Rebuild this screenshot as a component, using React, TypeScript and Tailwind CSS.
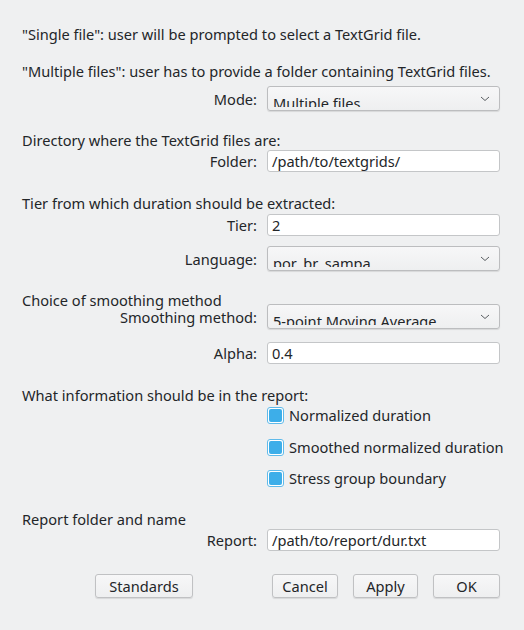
import React from 'react';

const Chevron = () => (
  <svg width="10" height="6" viewBox="0 0 10 6" className="absolute right-[9px] top-[9px]">
    <path d="M1 1 L5 4.5 L9 1" fill="none" stroke="#5a5e62" strokeWidth="1" />
  </svg>
);

const Combo = ({ value }: { value: string }) => (
  <div className="relative h-[25px] w-[233px] rounded-[3px] border border-[#bcbdbf] bg-gradient-to-b from-[#f7f7f8] to-[#eeeff0] shadow-[0_1px_1px_rgba(0,0,0,0.1)]">
    <div className="h-[20px] overflow-hidden pl-[5px] pt-[7px] leading-[18px] whitespace-nowrap">{value}</div>
    <Chevron />
  </div>
);

const Field = ({ value }: { value: string }) => (
  <div className="h-[22px] w-[233px] rounded-[3px] border border-[#c4c6c8] bg-white pl-[4px] leading-[20px]">{value}</div>
);

const Row = ({ label, children, className = '' }: { label: string; children: React.ReactNode; className?: string }) => (
  <div className={`flex items-center ${className}`}>
    <div className="w-[245px] pr-[10px] text-right whitespace-nowrap">{label}</div>
    {children}
  </div>
);

const Check = ({ label, className = '' }: { label: string; className?: string }) => (
  <div className={`flex h-[18px] items-center pl-[245px] ${className}`}>
    <div className="flex h-[17px] w-[17px] items-center justify-center rounded-[3px] border border-[#5fbaea] bg-white">
      <div className="h-[13px] w-[13px] rounded-[2px] bg-[#3daee9]" />
    </div>
    <span className="ml-[5px] leading-[18px] whitespace-nowrap">{label}</span>
  </div>
);

const Btn = ({ label, w }: { label: string; w: string }) => (
  <div className={`flex h-[24px] items-center justify-center rounded-[3px] border border-[#c0c1c3] bg-gradient-to-b from-[#f7f7f8] to-[#eeeff0] shadow-[0_1px_1px_rgba(0,0,0,0.1)] ${w}`}>
    {label}
  </div>
);

export default function App() {
  return (
    <div className="h-[630px] w-[524px] overflow-hidden bg-[#eff0f1] pl-[22px] text-[14.6px] leading-[18px] text-[#232629] [font-family:'Noto_Sans',sans-serif]">
      <p className="pt-[25px] whitespace-nowrap">"Single file": user will be prompted to select a TextGrid file.</p>
      <p className="mt-[19px] whitespace-nowrap">"Multiple files": user has to provide a folder containing TextGrid files.</p>
      <Row label="Mode:" className="mt-[6px]">
        <Combo value="Multiple files" />
      </Row>

      <p className="mt-[20px]">Directory where the TextGrid files are:</p>
      <Row label="Folder:" className="mt-[1px]">
        <Field value="/path/to/textgrids/" />
      </Row>

      <p className="mt-[22px]">Tier from which duration should be extracted:</p>
      <Row label="Tier:" className="mt-[2px]">
        <Field value="2" />
      </Row>
      <Row label="Language:" className="mt-[10px]">
        <Combo value="por_br_sampa" />
      </Row>

      <p className="mt-[21.5px] leading-[15px]">Choice of smoothing method</p>
      <Row label="Smoothing method:" className="mt-[-3.5px]">
        <Combo value="5-point Moving Average" />
      </Row>
      <Row label="Alpha:" className="mt-[13px]">
        <Field value="0.4" />
      </Row>

      <p className="mt-[22px]">What information should be in the report:</p>
      <Check label="Normalized duration" className="mt-[2px]" />
      <Check label="Smoothed normalized duration" className="mt-[14px]" />
      <Check label="Stress group boundary" className="mt-[13px]" />

      <p className="mt-[23px]">Report folder and name</p>
      <Row label="Report:" className="mt-[1px]">
        <Field value="/path/to/report/dur.txt" />
      </Row>

      <div className="mt-[23px] flex pl-[73px] pr-[24px]">
        <Btn label="Standards" w="w-[98px]" />
        <div className="flex-1" />
        <div className="flex gap-[15px]">
          <Btn label="Cancel" w="w-[66px]" />
          <Btn label="Apply" w="w-[65px]" />
          <Btn label="OK" w="w-[67px]" />
        </div>
      </div>
    </div>
  );
}
